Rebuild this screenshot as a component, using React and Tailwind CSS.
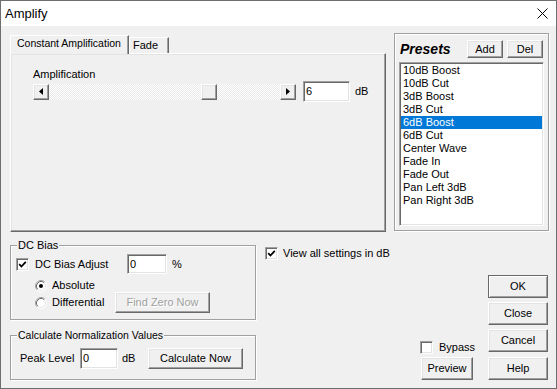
import React from 'react'

const raised = 'bg-[#f0f0f0] border border-t-white border-l-white border-r-[#696969] border-b-[#696969] shadow-[inset_-1px_-1px_0_#a0a0a0,inset_1px_1px_0_#e3e3e3]'
const sunken = 'bg-white border border-t-[#a0a0a0] border-l-[#a0a0a0] border-r-white border-b-white shadow-[inset_1px_1px_0_#696969,inset_-1px_-1px_0_#e3e3e3]'
const etched = 'border border-[#a0a0a0] shadow-[inset_1px_1px_0_#fff,1px_1px_0_#fff]'

const presets = [
    '10dB Boost',
    '10dB Cut',
    '3dB Boost',
    '3dB Cut',
    '6dB Boost',
    '6dB Cut',
    'Center Wave',
    'Fade In',
    'Fade Out',
    'Pan Left 3dB',
    'Pan Right 3dB',
]

function Btn({ children, className = '', disabled }) {
    return (
        <div className={`${raised} flex items-center justify-center shrink-0 ${disabled ? 'text-[#a0a0a0] [text-shadow:1px_1px_0_#fff]' : ''} ${className}`}>
            {children}
        </div>
    )
}

function Check({ checked }) {
    return (
        <span className={`${sunken} w-[13px] h-[13px] shrink-0 flex items-center justify-center`}>
            {checked && (
                <svg width="9" height="9" viewBox="0 0 9 9">
                    <path d="M1.2 4.2 L3.4 6.5 L7.8 1.8" stroke="#000" strokeWidth="1.8" fill="none" />
                </svg>
            )}
        </span>
    )
}

function Radio({ checked }) {
    return (
        <svg width="12" height="12" viewBox="0 0 12 12" className="shrink-0">
            <circle cx="6" cy="6" r="5.5" fill="#fff" />
            <path d="M2.11 9.89 A5.5 5.5 0 0 1 9.89 2.11" stroke="#a0a0a0" fill="none" />
            <path d="M9.89 2.11 A5.5 5.5 0 0 1 2.11 9.89" stroke="#fff" fill="none" />
            <path d="M2.82 9.18 A4.5 4.5 0 0 1 9.18 2.82" stroke="#696969" fill="none" />
            <path d="M9.18 2.82 A4.5 4.5 0 0 1 2.82 9.18" stroke="#e3e3e3" fill="none" />
            {checked && <circle cx="6" cy="6" r="2" fill="#000" />}
        </svg>
    )
}

export default function App() {
    return (
        <div className="w-[557px] h-[389px] border border-[#6e6e6e] bg-[#f0f0f0] flex flex-col font-['Liberation_Sans',Arial,sans-serif] text-[11px] leading-[13px] text-black overflow-hidden">
            {/* Title bar */}
            <div className="h-[25px] shrink-0 bg-white flex items-center justify-between pl-[4px] pr-[8px]">
                <span className="text-[13px] leading-[16px]">Amplify</span>
                <svg width="11" height="11" viewBox="0 0 11 11">
                    <path d="M0.5 0.5 L10.5 10.5 M10.5 0.5 L0.5 10.5" stroke="#000" strokeWidth="1" />
                </svg>
            </div>

            {/* Tabs + presets */}
            <div className="flex items-start shrink-0">
                <div className="ml-[9px] mt-[9px] w-[376px]">
                    <div className="flex items-end h-[19px]">
                        <div className="relative z-10 h-[19px] w-[119px] bg-[#f0f0f0] border-t border-l border-r border-t-white border-l-white border-r-[#696969] shadow-[inset_-1px_0_0_#a0a0a0] pl-[6px] pt-[1px] whitespace-nowrap text-[10.5px]">
                            Constant Amplification
                        </div>
                        <div className="h-[16px] mb-[1px] w-[40px] border-t border-l border-r border-t-white border-l-white border-r-[#696969] shadow-[inset_-1px_0_0_#a0a0a0] pl-[3px] pt-[1px]">
                            Fade
                        </div>
                    </div>
                    <div className={`-mt-px h-[179px] ${raised} pl-[22px] pt-[14px]`}>
                        <div>Amplification</div>
                        <div className="flex items-center h-[21px]">
                            <div className="flex h-[16px] w-[263px]">
                                <Btn className="w-[16px] h-[16px]">
                                    <svg width="4" height="7" viewBox="0 0 4 7"><path d="M4 0 L0 3.5 L4 7 Z" fill="#000" /></svg>
                                </Btn>
                                <div className="flex-1 bg-[image:repeating-conic-gradient(#ffffff_0%_25%,#e9e9e9_0%_50%)] bg-[length:2px_2px]">
                                    <Btn className="ml-[152px] w-[16px] h-[16px]" />
                                </div>
                                <Btn className="w-[16px] h-[16px]">
                                    <svg width="4" height="7" viewBox="0 0 4 7"><path d="M0 0 L4 3.5 L0 7 Z" fill="#000" /></svg>
                                </Btn>
                            </div>
                            <div className={`${sunken} ml-[7px] w-[47px] h-[21px] pl-[2px] flex items-center`}>6</div>
                            <span className="ml-[5px]">dB</span>
                        </div>
                    </div>
                </div>

                {/* Presets */}
                <div className={`ml-[8px] mt-[7px] w-[155px] h-[198px] ${etched} pl-[4px] pt-[6px]`}>
                    <div className="flex items-center h-[18px]">
                        <span className="ml-[1px] w-[67px] text-[14px] leading-[16px] font-bold italic">Presets</span>
                        <Btn className="w-[36px] h-[18px]">Add</Btn>
                        <Btn className="ml-[4px] w-[36px] h-[18px]">Del</Btn>
                    </div>
                    <div className={`${sunken} mt-[4px] w-[145px] h-[164px] p-[1px]`}>
                        {presets.map((p) => (
                            <div
                                key={p}
                                className={`h-[13px] pl-[2px] whitespace-nowrap ${p === '6dB Boost' ? 'bg-[#0078d7] text-white' : ''}`}
                            >
                                {p}
                            </div>
                        ))}
                    </div>
                </div>
            </div>

            {/* Bottom area */}
            <div className="flex flex-1">
                <div className="ml-[9px] w-[246px] flex flex-col">
                    {/* DC Bias */}
                    <div className={`relative mt-[13px] h-[75px] ${etched} pt-[8px] pl-[5px]`}>
                        <span className="absolute -top-[7px] left-[6px] px-[1px] bg-[#f0f0f0]">DC Bias</span>
                        <div className="flex items-center h-[20px]">
                            <Check checked />
                            <span className="ml-[6px] w-[92px]">DC Bias Adjust</span>
                            <div className={`${sunken} w-[40px] h-[20px] pl-[2px] flex items-center`}>0</div>
                            <span className="ml-[5px]">%</span>
                        </div>
                        <div className="mt-[5px] pl-[19px] flex items-center h-[13px]">
                            <Radio checked />
                            <span className="ml-[5px]">Absolute</span>
                        </div>
                        <div className="pl-[19px] flex items-center h-[21px]">
                            <div className="w-[80px] flex items-center">
                                <Radio />
                                <span className="ml-[5px]">Differential</span>
                            </div>
                            <Btn disabled className="w-[95px] h-[21px]">Find Zero Now</Btn>
                        </div>
                    </div>

                    {/* Normalization */}
                    <div className={`relative mt-[15px] h-[45px] ${etched} pt-[12px] pl-[9px]`}>
                        <span className="absolute -top-[7px] left-[6px] px-[1px] bg-[#f0f0f0] whitespace-nowrap text-[10.5px]">Calculate Normalization Values</span>
                        <div className="flex items-center h-[21px]">
                            <span className="w-[60px]">Peak Level</span>
                            <div className={`${sunken} w-[38px] h-[21px] pl-[2px] flex items-center`}>0</div>
                            <span className="ml-[4px] w-[26px]">dB</span>
                            <Btn className="w-[95px] h-[21px]">Calculate Now</Btn>
                        </div>
                    </div>
                </div>

                <div className="flex-1 flex flex-col">
                    <div className="ml-[9px] mt-[15px] flex items-center h-[13px]">
                        <Check checked />
                        <span className="ml-[5px]">View all settings in dB</span>
                    </div>
                    <div className="mt-[15px] flex justify-end items-end gap-[15px] pr-[8px]">
                        <div className="w-[53px] flex flex-col">
                            <div className="flex items-center h-[13px]">
                                <Check />
                                <span className="ml-[6px]">Bypass</span>
                            </div>
                            <Btn className="mt-[3px] ml-[1px] w-[52px] h-[23px]">Preview</Btn>
                        </div>
                        <div className="w-[60px] flex flex-col">
                            <div className="h-[23px] flex items-center justify-center border border-[#696969] shadow-[inset_1px_1px_0_#fff,inset_-1px_-1px_0_#a0a0a0]">OK</div>
                            <Btn className="mt-[4px] w-[60px] h-[23px]">Close</Btn>
                            <Btn className="mt-[4px] w-[60px] h-[23px]">Cancel</Btn>
                            <Btn className="mt-[5px] w-[60px] h-[23px]">Help</Btn>
                        </div>
                    </div>
                </div>
            </div>
        </div>
    )
}
